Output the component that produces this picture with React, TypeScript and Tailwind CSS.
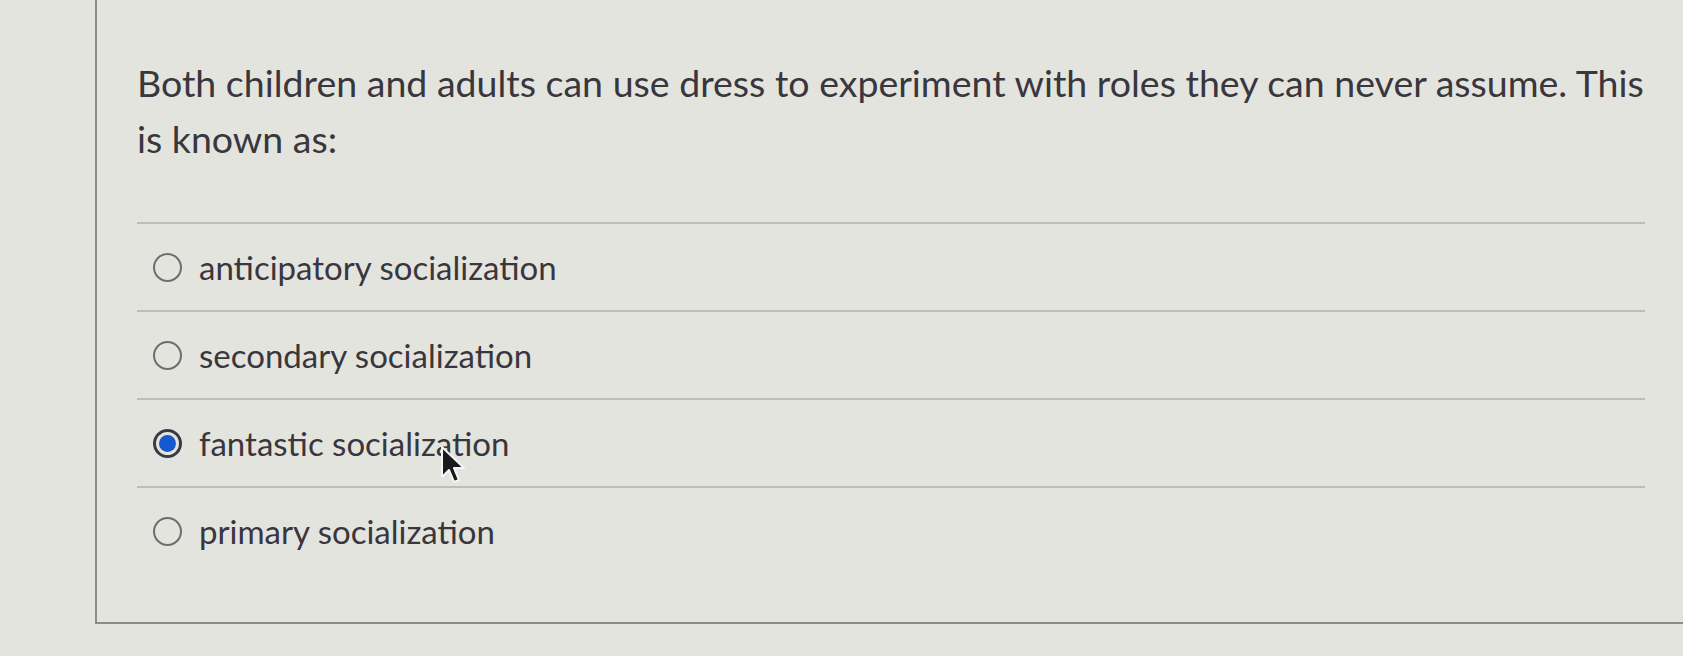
export default function App() {
  const options = [
    { label: "anticipatory socialization", checked: false },
    { label: "secondary socialization", checked: false },
    { label: "fantastic socialization", checked: true },
    { label: "primary socialization", checked: false },
  ];

  return (
    <div
      className="w-[1683px] h-[656px] overflow-hidden bg-[#e4e4df] text-[#39363d]"
      style={{ fontFamily: "Lato, 'Open Sans', sans-serif" }}
    >
      <div className="relative ml-[95px] h-[624px] border-l-2 border-b-2 border-[#8c8c8a] pl-[40px] pr-[10px] pt-[55px]">
        <p className="text-[37.5px] leading-[56px]">
          Both children and adults can use dress to experiment with roles they can never assume. This is known as:
        </p>

        <div className="mt-[55px] mr-[28px]">
          {options.map((o) => (
            <div
              key={o.label}
              className="h-[88px] flex items-center gap-[17px] border-t-2 border-[#bdbdba] pl-[16px]"
            >
              {o.checked ? (
                <span className="w-[29px] h-[29px] rounded-full border-[3px] border-[#3a3a44] flex items-center justify-center">
                  <span className="w-[17px] h-[17px] rounded-full bg-[#1558cf]" />
                </span>
              ) : (
                <span className="w-[29px] h-[29px] rounded-full border-2 border-[#6e6c70]" />
              )}
              <span className="text-[33px] leading-none">{o.label}</span>
            </div>
          ))}
        </div>

        <svg
          className="absolute left-[343px] top-[445px]"
          width="26"
          height="40"
          viewBox="0 0 13 20"
        >
          <path
            d="M1 1 L1 16 L4.5 12.5 L7 18.5 L9.5 17.5 L7 11.5 L12 11.5 Z"
            fill="#1a1a1e"
            stroke="#f5f5f5"
            strokeWidth="1"
            strokeLinejoin="round"
          />
        </svg>
      </div>
    </div>
  );
}
